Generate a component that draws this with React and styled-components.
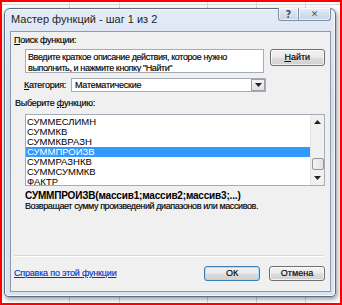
import React from "react";
import styled, { createGlobalStyle } from "styled-components";

const GlobalStyle = createGlobalStyle`
  html, body { margin: 0; padding: 0; background: #fff; }
  body { font-family: "Liberation Sans", Arial, sans-serif; }
`;

const gridLine = "linear-gradient(#d6d6d6, #d6d6d6)";

const Screen = styled.div`
  box-sizing: border-box;
  width: 342px;
  height: 305px;
  border: 2px solid #ff0000;
  padding: 6px 0 0 2px;
  background-color: #fff;
  background-image: ${Array(6).fill(gridLine).join(",")};
  background-repeat: no-repeat;
  background-size: 1px 100%, 1px 100%, 1px 100%, 1px 100%, 1px 100%, 100% 1px;
  background-position: 67px 0, 117px 0, 205px 0, 254px 0, 303px 0, 0 2px;
`;

const Window = styled.div`
  box-sizing: border-box;
  width: 332px;
  height: 289px;
  display: flex;
  flex-direction: column;
  padding: 0 4px 4px 5px;
  border: 1px solid #5d6d82;
  border-radius: 6px 6px 4px 4px;
  background: linear-gradient(#e3ebf6, #d3dff0 30%, #d9e4f2);
  box-shadow: 1px 2px 5px rgba(0, 0, 0, 0.45),
    inset 0 0 0 1px rgba(255, 255, 255, 0.75);
`;

const TitleBar = styled.div`
  height: 22px;
  display: flex;
  justify-content: space-between;
  align-items: flex-start;
`;

const Title = styled.div`
  margin-top: 3px;
  padding-left: 1px;
  font-size: 11px;
  line-height: 14px;
  color: #1e1e1e;
`;

const CaptionButtons = styled.div`
  display: flex;
  margin-top: -1px;
`;

const CaptionButton = styled.div`
  box-sizing: border-box;
  width: ${(p) => p.w}px;
  height: 13px;
  display: flex;
  align-items: center;
  justify-content: center;
  border: 1px solid #7f8ea3;
  border-top: none;
  margin-left: -1px;
  border-radius: ${(p) => (p.first ? "0 0 0 3px" : "0 0 3px 0")};
  background: linear-gradient(#e9eff8, #d4dfed 50%, #c7d5e8);
  box-shadow: inset 0 0 0 1px rgba(255, 255, 255, 0.6);
  font-family: "DejaVu Sans", sans-serif;
  font-size: ${(p) => (p.first ? 10 : 9)}px;
  font-weight: bold;
  color: #3d4a5c;
  text-shadow: 0 0 1px #fff, 0 0 1px #fff;
`;

const Client = styled.div`
  flex: 1;
  display: flex;
  flex-direction: column;
  padding: 0 5px 10px 3px;
  border: 1px solid #8e9aab;
  background: #f0f0f0;
  font-size: 9px;
  letter-spacing: -0.25px;
  line-height: 11px;
  color: #000;
  -webkit-text-stroke: 0.15px #000;
`;

const Label = styled.div`
  height: 11px;
  margin-top: ${(p) => p.mt || 0}px;
  padding-left: ${(p) => p.pl || 0}px;
  letter-spacing: ${(p) => (p.tight ? "-0.4px" : "inherit")};
  white-space: nowrap;
`;

const Key = styled.span`
  text-decoration: underline;
`;

const Row = styled.div`
  display: flex;
  align-items: flex-start;
  margin-top: ${(p) => p.mt || 0}px;
  padding-left: ${(p) => p.pl || 0}px;
`;

const SearchBox = styled.div`
  box-sizing: border-box;
  width: 241px;
  height: 24px;
  padding: 2px 2px 0;
  border: 1px solid #a5acb5;
  background: #fff;
  line-height: 11px;
  letter-spacing: -0.4px;
  white-space: nowrap;
  overflow: hidden;
`;

const Button = styled.div`
  box-sizing: border-box;
  width: 56px;
  height: ${(p) => p.h || 15}px;
  margin-left: ${(p) => p.ml || 0}px;
  display: flex;
  align-items: center;
  justify-content: center;
  letter-spacing: 0;
  border: 1px solid ${(p) => (p.primary ? "#3c7fb1" : "#707070")};
  border-radius: 3px;
  background: linear-gradient(#f2f2f2, #ebebeb 48%, #dddddd 52%, #cfcfcf);
  box-shadow: inset 0 0 0 1px
    ${(p) => (p.primary ? "rgba(160, 220, 255, 0.9)" : "rgba(255, 255, 255, 0.7)")};
`;

const CategoryLabel = styled.div`
  width: 47px;
  line-height: 14px;
`;

const Combo = styled.div`
  box-sizing: border-box;
  width: 195px;
  height: 14px;
  display: flex;
  border: 1px solid #a5acb5;
  background: #fff;
`;

const ComboText = styled.div`
  flex: 1;
  padding-left: 3px;
  line-height: 12px;
`;

const ComboArrow = styled.div`
  box-sizing: border-box;
  width: 14px;
  height: 12px;
  display: flex;
  align-items: center;
  justify-content: center;
  border: 1px solid #9aa1aa;
  background: linear-gradient(#f4f4f4, #e0e0e0);
`;

const ListBox = styled.div`
  box-sizing: border-box;
  width: 305px;
  height: 72px;
  display: flex;
  border: 1px solid #a5acb5;
  background: #fff;
`;

const Items = styled.div`
  flex: 1;
  padding-top: 2px;
`;

const Item = styled.div`
  height: 10px;
  line-height: 10px;
  padding-left: 1px;
  font-size: 9.5px;
  letter-spacing: 0;
  -webkit-text-stroke: 0;
  background: ${(p) => (p.selected ? "#3399ff" : "transparent")};
  color: ${(p) => (p.selected ? "#fff" : "#000")};
`;

const ScrollBar = styled.div`
  width: 13px;
  display: flex;
  flex-direction: column;
  align-items: center;
  background: #f0f0f0;
  border-left: 1px solid #e6e6e6;
`;

const ScrollArrow = styled.div`
  height: 14px;
  display: flex;
  align-items: center;
  justify-content: center;
`;

const ScrollTrack = styled.div`
  flex: 1;
  width: 100%;
  display: flex;
  flex-direction: column;
  justify-content: flex-end;
  align-items: center;
  padding-bottom: 1px;
`;

const Thumb = styled.div`
  box-sizing: border-box;
  width: 12px;
  height: 12px;
  border: 1px solid #979797;
  border-radius: 2px;
  background: linear-gradient(90deg, #f3f3f3, #e2e2e2);
`;

const Signature = styled.div`
  margin-top: 4px;
  padding-left: 11px;
  height: 11px;
  font-size: 10px;
  font-weight: bold;
  letter-spacing: -0.18px;
  -webkit-text-stroke: 0;
  white-space: nowrap;
`;

const Spacer = styled.div`
  flex: 1;
`;

const Separator = styled.div`
  height: 1px;
  margin: 0 1px 0 0;
  background: #d8d8d8;
  border-bottom: 1px solid #fff;
`;

const BottomRow = styled.div`
  display: flex;
  align-items: center;
  margin-top: 9px;
`;

const HelpLink = styled.div`
  flex: 1;
  color: #0033cc;
  -webkit-text-stroke: 0.15px #0033cc;
  letter-spacing: -0.2px;
  text-decoration: underline;
  white-space: nowrap;
`;

const Triangle = ({ up }) => (
  <svg width="7" height="4" viewBox="0 0 7 4">
    <path d={up ? "M0 4 L3.5 0 L7 4 Z" : "M0 0 L7 0 L3.5 4 Z"} fill="#222" />
  </svg>
);

const functions = [
  "СУММЕСЛИМН",
  "СУММКВ",
  "СУММКВРАЗН",
  "СУММПРОИЗВ",
  "СУММРАЗНКВ",
  "СУММСУММКВ",
  "ФАКТР",
];

export default function App() {
  return (
    <>
      <GlobalStyle />
      <Screen>
        <Window>
          <TitleBar>
            <Title>Мастер функций - шаг 1 из 2</Title>
            <CaptionButtons>
              <CaptionButton first w={21}>?</CaptionButton>
              <CaptionButton w={33}>✕</CaptionButton>
            </CaptionButtons>
          </TitleBar>
          <Client>
            <Label mt={3}>
              <Key>П</Key>оиск функции:
            </Label>
            <Row mt={3} pl={11}>
              <SearchBox>
                Введите краткое описание действия, которое нужно
                <br />
                выполнить, и нажмите кнопку "Найти"
              </SearchBox>
              <Button ml={6} h={17}>
                <span>
                  <Key>Н</Key>айти
                </span>
              </Button>
            </Row>
            <Row mt={5} pl={10}>
              <CategoryLabel>
                <Key>К</Key>атегория:
              </CategoryLabel>
              <Combo>
                <ComboText>Математические</ComboText>
                <ComboArrow>
                  <Triangle />
                </ComboArrow>
              </Combo>
            </Row>
            <Label mt={6} pl={1}>
              Выберите <Key>ф</Key>ункцию:
            </Label>
            <Row mt={5} pl={11}>
              <ListBox>
                <Items>
                  {functions.map((f) => (
                    <Item key={f} selected={f === "СУММПРОИЗВ"}>
                      {f}
                    </Item>
                  ))}
                </Items>
                <ScrollBar>
                  <ScrollArrow>
                    <Triangle up />
                  </ScrollArrow>
                  <ScrollTrack>
                    <Thumb />
                  </ScrollTrack>
                  <ScrollArrow>
                    <Triangle />
                  </ScrollArrow>
                </ScrollBar>
              </ListBox>
            </Row>
            <Signature>СУММПРОИЗВ(массив1;массив2;массив3;...)</Signature>
            <Label pl={11} tight>
              Возвращает сумму произведений диапазонов или массивов.
            </Label>
            <Spacer />
            <Separator />
            <BottomRow>
              <HelpLink>Справка по этой функции</HelpLink>
              <Button primary>ОК</Button>
              <Button ml={9}>Отмена</Button>
            </BottomRow>
          </Client>
        </Window>
      </Screen>
    </>
  );
}
